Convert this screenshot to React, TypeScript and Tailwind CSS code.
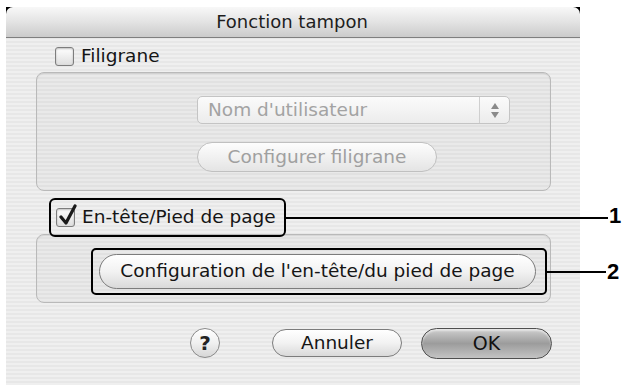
const Checkbox = ({ checked }: { checked?: boolean }) => (
    <div className="relative w-[19px] h-[19px] shrink-0 rounded-[3px] border border-[#7d7d7d] bg-gradient-to-b from-white to-[#dedede] shadow-[inset_0_1px_2px_rgba(0,0,0,0.25)]">
        {checked && (
            <svg className="absolute -top-[5px] left-[1px]" width="20" height="23" viewBox="0 0 20 23">
                <path d="M3 13 L8 19 L17 2" fill="none" stroke="#1a1a1a" strokeWidth="3.2" strokeLinecap="round" strokeLinejoin="round" />
            </svg>
        )}
    </div>
);

const App = () => {
    return (
        <div className="relative w-[626px] h-[387px] bg-white overflow-hidden font-['DejaVu_Sans',sans-serif] text-[#151515]">
            <div className="ml-[6px] mt-[7px] w-[574px] h-[378px] flex flex-col bg-[repeating-linear-gradient(180deg,#efefef_0px,#efefef_2px,#e7e7e7_2px,#e7e7e7_4px)]">
                {/* title bar */}
                <div className="h-[31px] bg-black shrink-0">
                    <div className="h-full rounded-t-[7px] bg-gradient-to-b from-[#f8f8f8] via-[#e3e3e3] to-[#cbcbcb] border-b border-[#7f7f7f] flex items-center justify-center">
                        <span className="text-[18px] leading-none text-[#1e1e1e] ml-[-2px]">Fonction tampon</span>
                    </div>
                </div>

                {/* Filigrane */}
                <div className="mt-[9px] ml-[49px] h-[19px] flex items-center gap-[7px]">
                    <Checkbox />
                    <span className="text-[18.5px] leading-none">Filigrane</span>
                </div>

                <div className="mt-[6px] ml-[30px] w-[515px] h-[119px] rounded-[8px] border border-[#b9b9b9] bg-black/[0.025] shadow-[inset_0_1px_1px_rgba(0,0,0,0.08)] flex flex-col">
                    <div className="mt-[23px] ml-[160px] w-[313px] h-[28px] rounded-[5px] border border-[#c4c4c4] bg-gradient-to-b from-[#fbfbfb] to-[#ececec] flex items-center">
                        <span className="flex-1 pl-[10px] text-[18.5px] leading-none text-[#a3a3a3]">Nom d'utilisateur</span>
                        <div className="w-[30px] h-full border-l border-[#cfcfcf] flex flex-col items-center justify-center gap-[3px]">
                            <svg width="8" height="6" viewBox="0 0 8 6"><path d="M4 0 L8 6 L0 6 Z" fill="#8a8a8a" /></svg>
                            <svg width="8" height="6" viewBox="0 0 8 6"><path d="M0 0 L8 0 L4 6 Z" fill="#8a8a8a" /></svg>
                        </div>
                    </div>
                    <div className="mt-[18px] ml-[160px] w-[240px] h-[30px] rounded-full border border-[#c0c0c0] bg-gradient-to-b from-[#fdfdfd] via-[#f1f1f1] to-[#e4e4e4] flex items-center justify-center">
                        <span className="text-[18.5px] leading-none text-[#a0a0a0]">Configurer filigrane</span>
                    </div>
                </div>

                {/* En-tête / Pied de page */}
                <div className="relative z-10 mt-[7px] ml-[43px] w-[237px] h-[39px] rounded-[6px] border-[2.5px] border-black flex items-center gap-[7px] pl-[5px]">
                    <Checkbox checked />
                    <span className="text-[18.5px] leading-none">En-tête/Pied de page</span>
                </div>

                <div className="-mt-[3px] ml-[30px] w-[515px] h-[69px] rounded-[8px] border border-[#b9b9b9] bg-black/[0.025] shadow-[inset_0_1px_1px_rgba(0,0,0,0.08)] flex flex-col">
                    <div className="mt-[13px] ml-[54px] w-[456px] h-[47px] rounded-[5px] border-[2.5px] border-black flex items-center">
                        <div className="ml-[6px] w-[437px] h-[35px] rounded-full border border-[#7c7c7c] bg-gradient-to-b from-white via-[#f2f2f2] to-[#d9d9d9] flex items-center justify-center">
                            <span className="text-[18.5px] leading-none">Configuration de l'en-tête/du pied de page</span>
                        </div>
                    </div>
                </div>

                {/* bottom buttons */}
                <div className="mt-[24px] ml-[184px] h-[32px] flex items-center">
                    <div className="w-[30px] h-[30px] rounded-full border border-[#8a8a8a] bg-gradient-to-b from-white via-[#f0f0f0] to-[#d6d6d6] flex items-center justify-center">
                        <span className="text-[20px] font-bold leading-none text-[#222]">?</span>
                    </div>
                    <div className="ml-[52px] w-[130px] h-[28px] rounded-full border border-[#7c7c7c] bg-gradient-to-b from-white via-[#f2f2f2] to-[#d9d9d9] flex items-center justify-center">
                        <span className="text-[18.5px] leading-none">Annuler</span>
                    </div>
                    <div className="ml-[19px] w-[131px] h-[31px] rounded-full border border-[#4f4f4f] bg-gradient-to-b from-[#cfcfcf] via-[#9c9c9c] to-[#c4c4c4] shadow-[inset_0_2px_2px_rgba(255,255,255,0.5)] flex items-center justify-center">
                        <span className="text-[19px] leading-none text-[#111]">OK</span>
                    </div>
                </div>
            </div>

            {/* callout leaders */}
            <div className="absolute left-[286px] top-[217px] w-[322px] h-[2px] bg-black" />
            <span className="absolute left-[609px] top-[205px] text-[22px] font-bold leading-none font-['Liberation_Sans',sans-serif] text-black">1</span>
            <div className="absolute left-[546px] top-[271px] w-[60px] h-[2px] bg-black" />
            <span className="absolute left-[607px] top-[261px] text-[22px] font-bold leading-none font-['Liberation_Sans',sans-serif] text-black">2</span>
        </div>
    );
};

export default App;
